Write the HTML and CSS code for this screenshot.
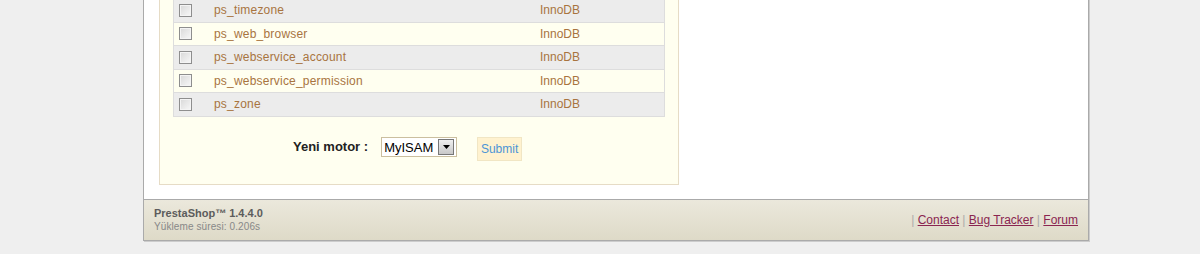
FILE: index.html
```html
<!DOCTYPE html>
<html lang="tr">
<head>
    <meta charset="UTF-8">
    <title>PrestaShop - Veritabanı motoru</title>
    <link rel="stylesheet" href="styles.css">
</head>
<body>
    <div class="page">
        <div class="container">
            <div class="content">
                <div class="engineBox">
                    <table class="tableList">
                        <tbody>
                            <tr class="alt">
                                <td class="checkCell"><input type="checkbox" class="rowCheck"></td>
                                <td class="nameCell">ps_timezone</td>
                                <td class="engineCell">InnoDB</td>
                            </tr>
                            <tr>
                                <td class="checkCell"><input type="checkbox" class="rowCheck"></td>
                                <td class="nameCell">ps_web_browser</td>
                                <td class="engineCell">InnoDB</td>
                            </tr>
                            <tr class="alt">
                                <td class="checkCell"><input type="checkbox" class="rowCheck"></td>
                                <td class="nameCell">ps_webservice_account</td>
                                <td class="engineCell">InnoDB</td>
                            </tr>
                            <tr>
                                <td class="checkCell"><input type="checkbox" class="rowCheck"></td>
                                <td class="nameCell">ps_webservice_permission</td>
                                <td class="engineCell">InnoDB</td>
                            </tr>
                            <tr class="alt">
                                <td class="checkCell"><input type="checkbox" class="rowCheck"></td>
                                <td class="nameCell">ps_zone</td>
                                <td class="engineCell">InnoDB</td>
                            </tr>
                        </tbody>
                    </table>

                    <form class="engineForm">
                        <label for="engineType" class="engineLabel">Yeni motor :</label>
                        <span class="selectBox">
                            <select id="engineType" class="engineSelect">
                                <option>MyISAM</option>
                                <option>InnoDB</option>
                            </select>
                            <span class="selectArrow">
                                <svg width="7" height="4" viewBox="0 0 7 4"><path d="M0 0h7L3.5 4z" fill="#000"/></svg>
                            </span>
                        </span>
                        <button type="button" class="submitButton">Submit</button>
                    </form>
                </div>
            </div>

            <div class="footer">
                <div class="footerLeft">
                    <div class="version">PrestaShop™ 1.4.4.0</div>
                    <div class="loadTime">Yükleme süresi: 0.206s</div>
                </div>
                <div class="footerLinks">
                    <span class="sep">|</span> <a href="#">Contact</a>
                    <span class="sep">|</span> <a href="#">Bug Tracker</a>
                    <span class="sep">|</span> <a href="#">Forum</a>
                </div>
            </div>
        </div>
    </div>
</body>
</html>
```

FILE: styles.css
```css
body {
    margin: 0;
    background-color: #fff;
    font-family: "Liberation Sans", Arial, sans-serif;
    font-size: 12px;
    color: #333;
}

.page {
    background-color: #efefef;
    padding-bottom: 13px;
}

.container {
    margin-left: 143px;
    width: 944px;
    background-color: #fff;
    border: 1px solid #aaa;
    border-top: none;
    box-shadow: 1px 1px 0 #ccc;
}

.content {
    padding: 0 15px 14px;
}

.engineBox {
    width: 492px;
    margin-top: -3px;
    padding: 0 13px 23px;
    background-color: #fffff0;
    border: 1px solid #e6dcc6;
}

.tableList {
    width: 492px;
    border-collapse: collapse;
    border: 1px solid #ddd;
    border-bottom-color: #ccc;
}

.tableList tr {
    height: 23.5px;
    background-color: #fffff0;
}

.tableList tr.alt {
    background-color: #ececec;
}

.tableList td {
    padding: 0;
    border-bottom: 1px solid #ddd;
    color: #a8743f;
}

.checkCell {
    width: 35px;
    padding-left: 5px !important;
}

.nameCell {
    width: 326px;
    letter-spacing: 0.2px;
}

.rowCheck {
    appearance: none;
    display: block;
    width: 13px;
    height: 13px;
    margin: 0;
    border: 1px solid #8e8e8e;
    background: linear-gradient(135deg, #d8d8d8, #f8f8f8);
    box-shadow: inset 0 0 0 1px #f4f4f4;
}

.engineForm {
    display: flex;
    align-items: center;
    padding: 20px 0 0 120px;
}

.engineLabel {
    font-size: 13px;
    font-weight: bold;
    color: #222;
    margin-right: 13px;
    margin-top: -5px;
}

.selectBox {
    display: inline-flex;
    align-items: center;
    height: 18px;
    padding-right: 2px;
    background-color: #fff;
    border: 1px solid #cbbf9f;
    margin-top: -3px;
}

.engineSelect {
    appearance: none;
    border: none;
    background: transparent;
    font-family: "Liberation Sans", Arial, sans-serif;
    font-size: 13px;
    color: #000;
    padding: 0 0 0 2px;
    width: 56px;
    outline: none;
}

.selectArrow {
    display: flex;
    align-items: center;
    justify-content: center;
    width: 14px;
    height: 14px;
    border: 1px solid #777;
    background: linear-gradient(#f0f0f0, #c8c8c8);
}

.submitButton {
    margin-left: 20px;
    height: 24px;
    width: 45px;
    padding: 0;
    font-family: "Liberation Sans", Arial, sans-serif;
    font-size: 12px;
    color: #4d95d6;
    background-color: #fff2cf;
    border: 1px solid #f1e6c4;
    cursor: pointer;
}

.footer {
    display: flex;
    justify-content: space-between;
    align-items: center;
    height: 40px;
    padding: 0 10px;
    border-top: 1px solid #aaa;
    background: linear-gradient(#ebe8dc, #dedac8);
}

.footerLeft {
    padding-top: 1px;
}

.version {
    font-size: 11px;
    font-weight: bold;
    color: #5c5c5c;
    line-height: 13px;
}

.loadTime {
    font-size: 10px;
    letter-spacing: 0.1px;
    color: #888;
    line-height: 13px;
}

.footerLinks {
    font-size: 12px;
    padding-top: 1px;
}

.footerLinks a {
    color: #8a2550;
}

.sep {
    color: #aaa;
}
```
